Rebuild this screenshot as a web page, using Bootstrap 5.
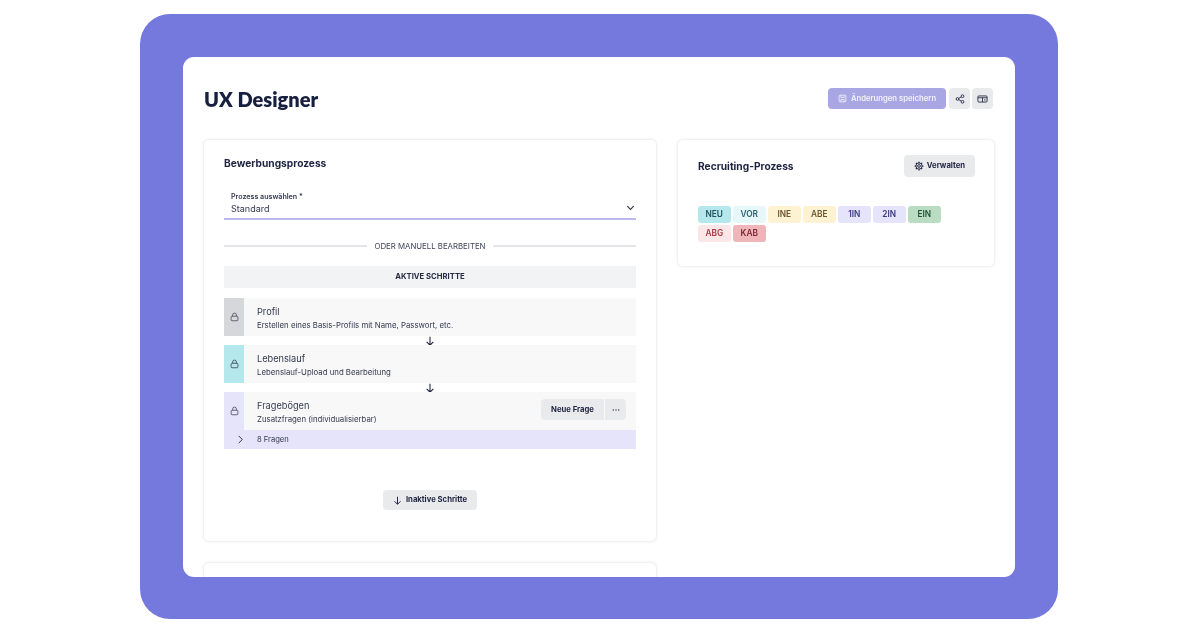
<!DOCTYPE html>
<html lang="de">
<head>
    <meta charset="UTF-8">
    <meta name="viewport" content="width=device-width, initial-scale=1.0">
    <title>UX Designer</title>
    <link href="https://cdn.jsdelivr.net/npm/bootstrap@5.3.0/dist/css/bootstrap.min.css" rel="stylesheet">
    <style>
        html, body { height: 100%; overflow: hidden; }
        body {
            font-family: "Inter", "Liberation Sans", sans-serif;
            background: #fff;
            color: #1e2340;
            padding: 14px 142px 9px 140px;
        }
        .frame { width: 918px; height: 605px; background: #7579de; border-radius: 30px; padding: 43px 43px 42px; }
        .panel { height: 520px; background: #fff; border-radius: 11px; overflow: hidden; padding: 21px 20px 0 20px; }
        .panel-inner { filter: blur(.4px); }
        .page-head { height: 41px; margin-bottom: 20px; }
        .page-title { font-family: "Lato", "Inter", sans-serif; font-size: 20px; font-weight: 800; color: #17203f; margin: 0 0 0 1px; }
        .head-actions { gap: 2px; padding-right: 2px; }
        .tool-btn { --bs-btn-border-width: 0; --bs-btn-padding-x: 0; --bs-btn-padding-y: 0; height: 21px; background: #e9eaec; color: #1e2340; font-size: 7.7px; font-weight: 700; border-radius: 4px; display: inline-flex; align-items: center; justify-content: center; gap: 4px; }
        .tool-btn:hover { background: #e0e1e4; color: #1e2340; }
        .save-btn { width: 118px; margin-right: 1px; background: #a8a6e3; color: #f2f2fc; font-weight: 600; }
        .save-btn:hover { background: #a8a6e3; color: #f2f2fc; }
        .square-btn { width: 21px; }
        .columns { gap: 20px; align-items: flex-start; }
        .left-col { width: 454px; }
        .right-col { width: 318px; }
        .soft-card { --bs-card-border-color: #f1f1f3; --bs-card-border-radius: 6px; --bs-card-border-width: 1px; box-shadow: 0 0 3px rgba(30,35,64,.07); }
        .process-card { height: 403px; padding: 17px 20px 0; }
        .next-card { height: 60px; margin-top: 20px; }
        .recruit-card { height: 128px; padding: 15px 19px 0 20px; }
        .card-head { font-size: 10.2px; font-weight: 700; color: #1e2340; margin: 0; }
        .field-wrap { margin-top: 23px; height: 28px; border-bottom: 2px solid #bcb9ef; padding: 0 7px; position: relative; }
        .field-label { font-size: 7.1px; font-weight: 600; line-height: 10px; color: #33384f; }
        .field-value { font-size: 9px; line-height: 14px; color: #33384f; }
        .field-chevron { position: absolute; right: 1px; top: 11px; }
        .or-line { margin-top: 19px; gap: 8px; font-size: 7.8px; color: #40445a; line-height: 14px; }
        .or-line hr { flex: 1; margin: 0; border: 0; border-top: 2px solid #e4e5e8; opacity: 1; }
        .band { margin-top: 13px; height: 22px; background: #f2f3f5; font-size: 7.7px; font-weight: 700; color: #262b45; }
        .step { height: 38px; background: #f8f8f8; }
        .first-step { margin-top: 10px; }
        .step-strip { width: 20px; }
        .strip-grey { background: #d6d7db; }
        .strip-cyan { background: #b5e8ed; }
        .strip-lilac { background: #e6e4fa; }
        .step-text { padding-left: 13px; }
        .step-name { font-size: 9.2px; line-height: 15px; color: #33384f; }
        .step-desc { font-size: 7.8px; line-height: 12px; color: #33384f; }
        .step-arrow { height: 9px; }
        .step-actions { gap: 1px; padding: 0 10px 3px 0; }
        .new-btn { width: 63px; border-radius: 4px 0 0 4px; }
        .more-btn { width: 21px; border-radius: 0 4px 4px 0; }
        .questions { height: 19px; background: #e6e4fa; font-size: 7.6px; color: #33384f; }
        .questions-icon { width: 33px; padding-left: 13px; }
        .inactive-wrap { margin-top: 41px; }
        .inactive-btn { width: 94px; height: 20px; }
        .manage-btn { width: 71px; height: 22px; gap: 3px; }
        .recruit-title { font-size: 10.2px; font-weight: 700; }
        .stage-list { margin-top: 29px; gap: 2px 2.5px; }
        .stage { width: 32.5px; height: 17px; border-radius: 3px; font-size: 8.3px; font-weight: 600; }
        .st-neu { background: #b5e8ed; color: #1f5560; }
        .st-vor { background: #e6f8fa; color: #2f6570; }
        .st-ine, .st-abe { background: #fdf3d3; color: #6b5530; }
        .st-in { background: #e6e4fa; color: #3a3a80; }
        .st-ein { background: #b9dcc3; color: #245238; }
        .st-abg { background: #fbe6e8; color: #a33a42; }
        .st-kab { background: #efb6ba; color: #7d2a30; }
    </style>
</head>
<body>
<div class="frame">
    <div class="panel">
        <div class="panel-inner">
            <div class="page-head d-flex justify-content-between align-items-center">
                <h1 class="page-title">UX Designer</h1>
                <div class="head-actions d-flex">
                    <button class="btn tool-btn save-btn">
                        <svg width="9" height="9" viewBox="0 0 16 16" fill="none" stroke="currentColor" stroke-width="1.5"><rect x="2" y="2" width="12" height="12" rx="2"/><path d="M5 2v4h6V2M5 14v-4h6v4"/></svg>
                        Änderungen speichern
                    </button>
                    <button class="btn tool-btn square-btn" aria-label="Teilen">
                        <svg width="10" height="10" viewBox="0 0 16 16" fill="none" stroke="currentColor" stroke-width="1.4"><circle cx="12" cy="3.5" r="2.2"/><circle cx="4" cy="8" r="2.2"/><circle cx="12" cy="12.5" r="2.2"/><path d="M6 7l4-2.4M6 9l4 2.4"/></svg>
                    </button>
                    <button class="btn tool-btn square-btn" aria-label="Vorschau">
                        <svg width="11" height="10" viewBox="0 0 18 16" fill="none" stroke="currentColor" stroke-width="1.4"><rect x="1.5" y="3" width="15" height="10" rx="1.5"/><path d="M1.500 6h15M9 6v7M11.500 9.500h2.500"/></svg>
                    </button>
                </div>
            </div>

            <div class="columns d-flex">
                <div class="left-col">
                    <div class="card soft-card process-card">
                        <h2 class="card-head">Bewerbungsprozess</h2>
                        <div class="field-wrap">
                            <div class="field-label">Prozess auswählen *</div>
                            <div class="field-value">Standard</div>
                            <svg class="field-chevron" width="9" height="9" viewBox="0 0 10 10" fill="none" stroke="#33384f" stroke-width="1.3"><path d="M1.500 3.500L5 7l3.500-3.500"/></svg>
                        </div>
                        <div class="or-line d-flex align-items-center">
                            <hr>
                            <span>ODER MANUELL BEARBEITEN</span>
                            <hr>
                        </div>
                        <div class="band d-flex align-items-center justify-content-center">AKTIVE SCHRITTE</div>

                        <div class="step first-step d-flex">
                            <div class="step-strip strip-grey d-flex align-items-center justify-content-center">
                                <svg width="9" height="10" viewBox="0 0 12 13" fill="none" stroke="#4a4e60" stroke-width="1.100"><rect x="1.500" y="5.500" width="9" height="6" rx="1.200"/><path d="M3.500 5.500V3.800a2.500 2.500 0 0 1 5 0v1.700"/></svg>
                            </div>
                            <div class="step-text d-flex flex-column justify-content-center">
                                <div class="step-name">Profil</div>
                                <div class="step-desc">Erstellen eines Basis-Profils mit Name, Passwort, etc.</div>
                            </div>
                        </div>
                        <div class="step-arrow d-flex justify-content-center align-items-center">
                            <svg width="10" height="10" viewBox="0 0 12 12" fill="none" stroke="#1e2340" stroke-width="1.300"><path d="M6 1v10M2 7l4 4 4-4"/></svg>
                        </div>
                        <div class="step d-flex">
                            <div class="step-strip strip-cyan d-flex align-items-center justify-content-center">
                                <svg width="9" height="10" viewBox="0 0 12 13" fill="none" stroke="#3b4a55" stroke-width="1.100"><rect x="1.500" y="5.500" width="9" height="6" rx="1.200"/><path d="M3.500 5.500V3.800a2.500 2.500 0 0 1 5 0v1.700"/></svg>
                            </div>
                            <div class="step-text d-flex flex-column justify-content-center">
                                <div class="step-name">Lebenslauf</div>
                                <div class="step-desc">Lebenslauf-Upload und Bearbeitung</div>
                            </div>
                        </div>
                        <div class="step-arrow d-flex justify-content-center align-items-center">
                            <svg width="10" height="10" viewBox="0 0 12 12" fill="none" stroke="#1e2340" stroke-width="1.300"><path d="M6 1v10M2 7l4 4 4-4"/></svg>
                        </div>
                        <div class="step d-flex align-items-stretch">
                            <div class="step-strip strip-lilac d-flex align-items-center justify-content-center">
                                <svg width="9" height="10" viewBox="0 0 12 13" fill="none" stroke="#4a4e60" stroke-width="1.100"><rect x="1.500" y="5.500" width="9" height="6" rx="1.200"/><path d="M3.500 5.500V3.800a2.500 2.500 0 0 1 5 0v1.700"/></svg>
                            </div>
                            <div class="step-text d-flex flex-column justify-content-center flex-grow-1">
                                <div class="step-name">Fragebögen</div>
                                <div class="step-desc">Zusatzfragen (individualisierbar)</div>
                            </div>
                            <div class="step-actions d-flex align-items-center">
                                <button class="btn tool-btn new-btn">Neue Frage</button>
                                <button class="btn tool-btn more-btn" aria-label="Mehr">
                                    <svg width="8" height="8" viewBox="0 0 8 8" fill="#33384f"><circle cx="1.300" cy="4" r=".7"/><circle cx="4" cy="4" r=".7"/><circle cx="6.700" cy="4" r=".7"/></svg>
                                </button>
                            </div>
                        </div>
                        <div class="questions d-flex align-items-center">
                            <div class="questions-icon d-flex">
                                <svg width="7" height="9" viewBox="0 0 7 10" fill="none" stroke="#1e2340" stroke-width="1"><path d="M1.500 1L5.500 5l-4 4"/></svg>
                            </div>
                            <span>8 Fragen</span>
                        </div>

                        <div class="inactive-wrap d-flex justify-content-center">
                            <button class="btn tool-btn inactive-btn">
                                <svg width="9" height="9" viewBox="0 0 12 12" fill="none" stroke="#1e2340" stroke-width="1.300"><path d="M6 1v10M2 7l4 4 4-4"/></svg>
                                Inaktive Schritte
                            </button>
                        </div>
                    </div>
                    <div class="card soft-card next-card"></div>
                </div>

                <div class="right-col">
                    <div class="card soft-card recruit-card">
                        <div class="d-flex justify-content-between align-items-center">
                            <h2 class="recruit-title m-0">Recruiting-Prozess</h2>
                            <button class="btn tool-btn manage-btn">
                                <svg width="10" height="10" viewBox="0 0 16 16" fill="none" stroke="currentColor"><circle cx="8" cy="8" r="2.200" stroke-width="1.500"/><circle cx="8" cy="8" r="5" stroke-width="1.500"/><path stroke-width="2" d="M8 1v2M8 13v2M1 8h2M13 8h2M3 3l1.500 1.500M11.500 11.500L13 13M13 3l-1.500 1.500M4.500 11.500L3 13"/></svg>
                                Verwalten
                            </button>
                        </div>
                        <div class="stage-list d-flex flex-wrap">
                            <span class="stage st-neu d-flex align-items-center justify-content-center">NEU</span>
                            <span class="stage st-vor d-flex align-items-center justify-content-center">VOR</span>
                            <span class="stage st-ine d-flex align-items-center justify-content-center">INE</span>
                            <span class="stage st-abe d-flex align-items-center justify-content-center">ABE</span>
                            <span class="stage st-in d-flex align-items-center justify-content-center">1IN</span>
                            <span class="stage st-in d-flex align-items-center justify-content-center">2IN</span>
                            <span class="stage st-ein d-flex align-items-center justify-content-center">EIN</span>
                            <span class="stage st-abg d-flex align-items-center justify-content-center">ABG</span>
                            <span class="stage st-kab d-flex align-items-center justify-content-center">KAB</span>
                        </div>
                    </div>
                </div>
            </div>
        </div>
    </div>
</div>
<script src="https://cdn.jsdelivr.net/npm/bootstrap@5.3.0/dist/js/bootstrap.bundle.min.js"></script>
</body>
</html>
